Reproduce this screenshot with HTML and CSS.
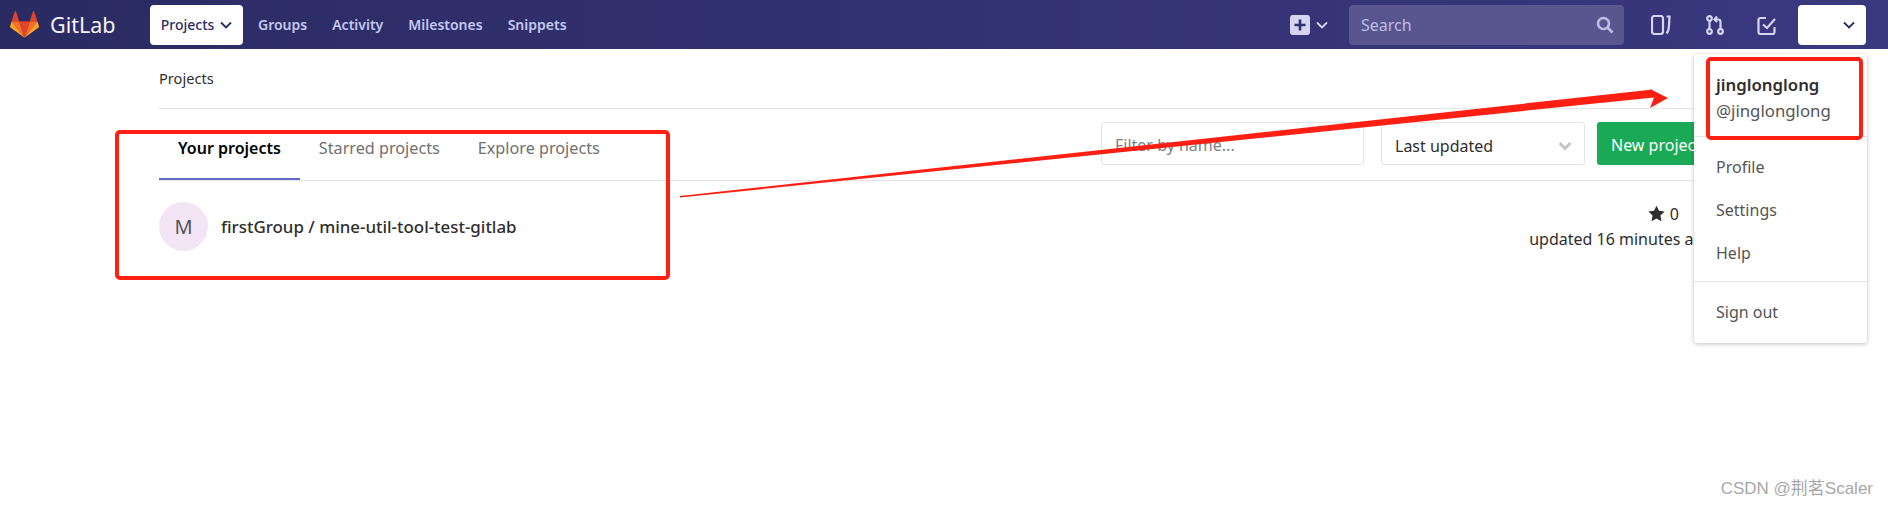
FILE: index.html
```html
<!DOCTYPE html>
<html lang="en">
<head>
    <meta charset="UTF-8">
    <title>Projects · GitLab</title>
    <link rel="stylesheet" href="styles.css">
</head>
<body>
    <header class="navbar">
        <a class="brand">
            <svg class="tanuki" viewBox="0 0 36 36">
                <path fill="#e24329" d="M18 34.38 24.63 13.97H11.37z"/>
                <path fill="#fc6d26" d="M18 34.38 11.37 13.97H2.08z"/>
                <path fill="#fca326" d="M2.08 13.97.06 20.17a1.38 1.38 0 0 0 .5 1.54L18 34.38z"/>
                <path fill="#e24329" d="M2.08 13.97h9.29L7.38 1.68a.68.68 0 0 0-1.3 0z"/>
                <path fill="#fc6d26" d="M18 34.38l6.63-20.41h9.29z"/>
                <path fill="#fca326" d="M33.92 13.97l2.02 6.2a1.38 1.38 0 0 1-.5 1.54L18 34.38z"/>
                <path fill="#e24329" d="M33.92 13.97h-9.29l3.99-12.29a.68.68 0 0 1 1.3 0z"/>
            </svg>
            <span class="brand-name">GitLab</span>
        </a>
        <nav class="nav-links">
            <a class="nav-active">Projects
                <svg class="chevron" viewBox="0 0 12 8"><path d="M1 1.5l5 5 5-5"/></svg>
            </a>
            <a class="nav-link">Groups</a>
            <a class="nav-link">Activity</a>
            <a class="nav-link">Milestones</a>
            <a class="nav-link">Snippets</a>
        </nav>
        <div class="nav-right">
            <div class="new-menu">
                <svg class="plus-box" viewBox="0 0 20 20">
                    <rect width="20" height="20" rx="3" fill="#d5d5f2"/>
                    <path d="M10 4.5v11M4.5 10h11" stroke="#2f2e6e" stroke-width="2.6" fill="none"/>
                </svg>
                <svg class="chevron chevron-light" viewBox="0 0 12 8"><path d="M1 1.5l5 5 5-5"/></svg>
            </div>
            <div class="search">
                <span class="search-text">Search</span>
                <svg class="search-icon" viewBox="0 0 18 18">
                    <circle cx="7.5" cy="7.5" r="5.5"/>
                    <path d="M11.5 11.5l5 5"/>
                </svg>
            </div>
            <svg class="nav-icon board-icon" viewBox="0 0 20 20">
                <rect x="1" y="1" width="11" height="18" rx="2.5"/>
                <path d="M15.5 1.5h3l-.6 10q-.3 5-2.4 7"/>
            </svg>
            <svg class="nav-icon mr-icon" viewBox="0 0 18 20">
                <circle cx="3.5" cy="3.5" r="2.3"/>
                <circle cx="3.5" cy="16.5" r="2.3"/>
                <circle cx="14.5" cy="16.5" r="2.3"/>
                <path d="M3.5 6v8M14.5 14V7q0-2.500-2.500-2.500H9M11 1.500L8.500 4.500 11 7"/>
            </svg>
            <svg class="nav-icon todo-icon" viewBox="0 0 20 20">
                <path d="M17.500 12v5a2 2 0 0 1-2 2H3.500a2 2 0 0 1-2-2V5a2 2 0 0 1 2-2H9"/>
                <path d="M6 9.500l4 3.500 8-9"/>
            </svg>
            <div class="user-menu">
                <svg class="chevron" viewBox="0 0 12 8"><path d="M1 1.500l5 5 5-5"/></svg>
            </div>
        </div>
    </header>

    <main class="content">
        <div class="breadcrumb">Projects</div>
        <div class="tabs-row">
            <ul class="tabs">
                <li class="tab tab-active">Your projects</li>
                <li class="tab">Starred projects</li>
                <li class="tab">Explore projects</li>
            </ul>
            <div class="controls">
                <input class="filter" type="text" placeholder="Filter by name...">
                <div class="sort">
                    <span>Last updated</span>
                    <svg class="sort-chevron" viewBox="0 0 14 10"><path d="M1.500 2l5.500 5.500L12.500 2"/></svg>
                </div>
                <a class="btn-new">New project</a>
            </div>
        </div>
        <div class="project-row">
            <div class="avatar">M</div>
            <div class="project-name">firstGroup / mine-util-tool-test-gitlab</div>
            <div class="project-meta">
                <div class="stars">
                    <svg class="star" viewBox="0 0 16 16"><path d="M8 .6l2.300 4.900 5.300.7-3.900 3.700 1 5.300L8 12.600l-4.700 2.600 1-5.300L.4 6.200l5.300-.7z"/></svg>
                    <span>0</span>
                </div>
                <div class="updated">updated 16 minutes ago</div>
            </div>
        </div>
    </main>

    <div class="user-dropdown">
        <div class="user-head">
            <div class="user-name">jinglonglong</div>
            <div class="user-handle">@jinglonglong</div>
        </div>
        <div class="menu-group">
            <a class="menu-item">Profile</a>
            <a class="menu-item">Settings</a>
            <a class="menu-item">Help</a>
        </div>
        <div class="menu-group menu-last">
            <a class="menu-item">Sign out</a>
        </div>
    </div>

    <!-- red annotations drawn on top of the screenshot -->
    <div class="mark mark-tabs"></div>
    <div class="mark mark-user"></div>
    <svg class="mark-arrow" viewBox="0 0 1888 507">
        <polygon fill="#ff2013" points="680,196 1653,89.500 1650,89 1668,98 1650,108 1654,97.500 680,197.500"/>
    </svg>
    <div class="watermark">CSDN @荆茗Scaler</div>
</body>
</html>
```

FILE: styles.css
```css
html, body {
    margin: 0;
    height: 507px;
    overflow: hidden;
    background: white;
}
body {
    font-family: "Noto Sans", "Open Sans", sans-serif;
    font-size: 16px;
    color: #2e2e2e;
}
a { text-decoration: none; }

/* top bar */
.navbar {
    display: flex;
    align-items: center;
    height: 49px;
    background: linear-gradient(90deg, #2b2b63, #3a387f);
}
.brand {
    display: flex;
    align-items: center;
    width: 150px;
    padding-left: 9px;
    box-sizing: border-box;
}
.tanuki {
    width: 31px;
    height: 29px;
}
.brand-name {
    margin-left: 10px;
    font-size: 21.500px;
    color: #f4f4fb;
}
.nav-links {
    display: flex;
    align-items: center;
    font-weight: 600;
    font-size: 14px;
}
.nav-active {
    display: flex;
    align-items: center;
    justify-content: center;
    gap: 6px;
    width: 93px;
    height: 40px;
    background: white;
    border-radius: 4px;
    font-weight: 500;
    color: #2b2b63;
}
.nav-link {
    margin-left: 15px;
    margin-right: 10px;
    color: #c3c8f0;
}
.chevron {
    width: 12px;
    height: 8px;
    fill: none;
    stroke: #2b2b63;
    stroke-width: 1.800;
}
.chevron-light { stroke: #d5d5f2; }
.nav-right {
    display: flex;
    align-items: center;
    margin-left: auto;
    margin-right: 22px;
}
.new-menu {
    display: flex;
    align-items: center;
    gap: 6px;
}
.plus-box {
    width: 20px;
    height: 20px;
}
.search {
    display: flex;
    align-items: center;
    justify-content: space-between;
    width: 275px;
    height: 40px;
    margin-left: 21px;
    padding: 0 10px 0 12px;
    box-sizing: border-box;
    background: #59558f;
    border-radius: 4px;
    color: #bcbce4;
    font-size: 16px;
}
.search-icon {
    width: 18px;
    height: 18px;
    fill: none;
    stroke: #bcbce4;
    stroke-width: 2.600;
}
.nav-icon {
    height: 20px;
    fill: none;
    stroke: #d5d5f2;
    stroke-width: 2.200;
}
.board-icon { width: 20px; margin-left: 27px; }
.mr-icon { width: 18px; margin-left: 35px; }
.todo-icon { width: 20px; margin-left: 33px; }
.user-menu {
    display: flex;
    align-items: center;
    justify-content: flex-end;
    width: 68px;
    height: 40px;
    margin-left: 21px;
    padding-right: 11px;
    box-sizing: border-box;
    background: white;
    border-radius: 4px;
}

/* main column */
.content {
    width: 1570px;
    margin-left: 159px;
}
.breadcrumb {
    height: 60px;
    box-sizing: border-box;
    padding-top: 18px;
    border-bottom: 1px solid #e5e5e5;
    font-size: 14.600px;
    line-height: 22px;
}
.tabs-row {
    display: flex;
    justify-content: space-between;
    height: 72px;
    box-sizing: border-box;
    border-bottom: 1px solid #e5e5e5;
}
.tabs {
    display: flex;
    margin: 0;
    padding: 0;
    list-style: none;
}
.tab {
    height: 71px;
    box-sizing: border-box;
    padding: 28px 19px 0;
    font-size: 16.200px;
    line-height: 22px;
    color: #707070;
}
.tab-active {
    font-size: 16px;
    font-weight: 600;
    color: #000;
    border-bottom: 2px solid #6666c4;
}
.controls {
    display: flex;
    align-items: flex-start;
    gap: 17px;
    padding: 13px 19px 0 0;
}
.filter {
    width: 263px;
    height: 43px;
    box-sizing: border-box;
    padding: 3px 13px 0;
    border: 1px solid #e5e5e5;
    border-radius: 3px;
    font: inherit;
    color: #555;
}
.filter::placeholder { color: #808080; }
.sort {
    display: flex;
    align-items: center;
    justify-content: space-between;
    width: 204px;
    height: 43px;
    box-sizing: border-box;
    padding: 4px 12px 0 13px;
    border: 1px solid #e5e5e5;
    border-radius: 3px;
}
.sort-chevron {
    width: 14px;
    height: 10px;
    fill: none;
    stroke: #c4c4c4;
    stroke-width: 2.800;
}
.btn-new {
    width: 113px;
    height: 43px;
    margin-left: -5px;
    box-sizing: border-box;
    padding-left: 14px;
    background: #1aaa55;
    border-radius: 3px;
    color: white;
    line-height: 46px;
}

/* project list */
.project-row {
    display: flex;
    align-items: center;
    height: 90px;
}
.avatar {
    display: flex;
    align-items: center;
    justify-content: center;
    width: 49px;
    height: 49px;
    border-radius: 50%;
    background: #f3e5f5;
    color: #555;
    font-size: 20px;
}
.project-name {
    margin-left: 13px;
    font-weight: 500;
    font-size: 16.900px;
}
.project-meta {
    margin-left: auto;
    margin-right: 16px;
    text-align: right;
}
.stars {
    display: flex;
    justify-content: flex-end;
    align-items: center;
    gap: 5px;
    margin-right: 34px;
    line-height: 22px;
}
.star {
    width: 17px;
    height: 17px;
    fill: #2e2e2e;
}
.updated {
    margin-top: 3px;
    line-height: 22px;
}

/* user dropdown */
.user-dropdown {
    position: absolute;
    top: 54px;
    left: 1694px;
    width: 173px;
    height: 289px;
    box-sizing: border-box;
    background: white;
    border-radius: 3px;
    box-shadow: 0 1px 4px rgba(0,0,0,0.25);
}
.user-head {
    height: 83px;
    box-sizing: border-box;
    padding: 20px 0 0 22px;
    border-bottom: 1px solid #e5e5e5;
    font-size: 16.800px;
}
.user-name {
    font-weight: 600;
    line-height: 22px;
}
.user-handle {
    margin-top: 4px;
    line-height: 22px;
    color: #555;
}
.menu-group {
    padding: 9px 0 6px;
    border-bottom: 1px solid #e5e5e5;
}
.menu-last { border-bottom: none; padding-top: 9px; }
.menu-item {
    display: block;
    height: 43px;
    padding-left: 22px;
    line-height: 43px;
    color: #555;
}

/* annotations */
.mark {
    position: absolute;
    box-sizing: border-box;
    border: 4px solid #ff2013;
    border-radius: 5px;
}
.mark-tabs {
    top: 130px;
    left: 115px;
    width: 555px;
    height: 150px;
}
.mark-user {
    top: 57px;
    left: 1706px;
    width: 157px;
    height: 83px;
}
.mark-arrow {
    position: absolute;
    top: 0;
    left: 0;
    width: 1888px;
    height: 507px;
    pointer-events: none;
}
.watermark {
    position: absolute;
    top: 479px;
    right: 15px;
    font-family: "Liberation Sans", "Noto Sans CJK SC", sans-serif;
    font-size: 17px;
    line-height: 20px;
    color: #a8a8a8;
}
```
